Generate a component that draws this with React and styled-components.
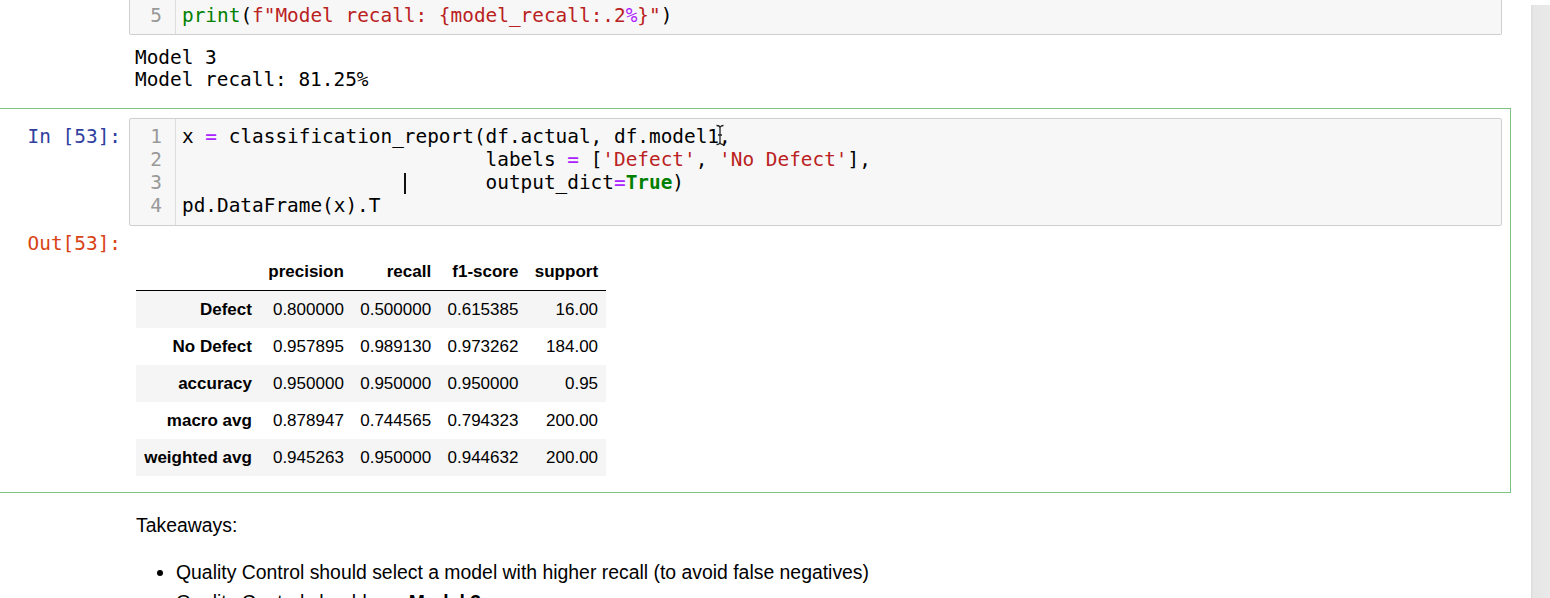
import React from "react";
import styled, { createGlobalStyle } from "styled-components";

const GlobalStyle = createGlobalStyle`
  html, body {
    margin: 0;
    padding: 0;
    background: #fff;
    height: 598px;
    overflow: hidden;
  }
`;

const mono = `"DejaVu Sans Mono", "Liberation Mono", monospace`;
const sans = `"Liberation Sans", Arial, sans-serif`;

const Page = styled.div`
  display: flex;
  height: 598px;
  background: #fff;
`;

const Notebook = styled.div`
  flex: 0 0 1511px;
  display: flex;
  flex-direction: column;
`;

const Spacer = styled.div`
  flex: 1;
`;

const Scrollbar = styled.div`
  width: 19px;
  margin-top: 5px;
  background: linear-gradient(90deg, #d9d9d9 0, #e6e6e6 2px, #e9e9e9 100%);
`;

const TopShade = styled.div`
  height: 5px;
  background: linear-gradient(#e6e6e6, #efefef 70%, #fafafa);
`;

const Cell = styled.div`
  padding: ${(p) => (p.$selected ? "9px 8px 16px 0" : "0 9px 17px 0")};
  border: ${(p) => (p.$selected ? "1px solid #7dc382" : "none")};
  border-left: none;
`;

const Row = styled.div`
  display: flex;
  align-items: flex-start;
`;

const Prompt = styled.div`
  flex: 0 0 129px;
  box-sizing: border-box;
  padding: ${(p) => p.$top || 0}px 8px 0 0;
  text-align: right;
  font-family: ${mono};
  font-size: 19.4px;
  line-height: 23px;
  color: ${(p) => (p.$out ? "#d84315" : "#303f9f")};
  white-space: pre;
`;

const CodeBox = styled.div`
  flex: 1;
  display: flex;
  background: #f7f7f7;
  border: 1px solid #cfcfcf;
  border-top: ${(p) => (p.$cut ? "none" : "1px solid #cfcfcf")};
  border-radius: ${(p) => (p.$cut ? "0 0 2px 2px" : "2px")};
  font-family: ${mono};
  font-size: 19.4px;
  line-height: 23px;
`;

const Gutter = styled.div`
  flex: 0 0 46px;
  box-sizing: border-box;
  padding: ${(p) => p.$pad};
  padding-right: 13px;
  border-right: 1px solid #dddddd;
  text-align: right;
  color: #999;
`;

const Code = styled.pre`
  flex: 1;
  margin: 0;
  padding: ${(p) => p.$pad};
  padding-left: 6px;
  font: inherit;
  color: #000;
  white-space: pre;
`;

const Tok = styled.span`
  color: ${(p) => p.$c};
  font-weight: ${(p) => (p.$b ? "bold" : "normal")};
`;

const Caret = styled.span`
  display: inline-block;
  width: 0;
  height: 21px;
  margin-right: -2px;
  border-left: 2px solid #111;
  vertical-align: -5px;
`;

const Pointer = styled.span`
  position: relative;
  display: inline-block;
  width: 0;
  height: 0;

  svg {
    position: absolute;
    left: -4px;
    top: -19px;
  }
`;

const StreamText = styled.pre`
  margin: 0;
  padding: 12px 0 0 6px;
  font-family: ${mono};
  font-size: 19.4px;
  line-height: 22px;
  color: #000;
`;

const OutputHtml = styled.div`
  padding: 27px 0 0 7px;
`;

const Table = styled.table`
  border-collapse: collapse;
  border-spacing: 0;
  font-family: ${sans};
  font-size: 17px;
  line-height: 21px;
  color: #000;

  th,
  td {
    padding: 8px 8.2px;
    text-align: right;
    white-space: nowrap;
  }

  thead th {
    border-bottom: 1px solid #000;
    vertical-align: bottom;
  }

  tbody tr:nth-child(odd) {
    background: #f5f5f5;
  }
`;

const Markdown = styled.div`
  padding: 20px 0 0 136px;
  font-family: ${sans};
  font-size: 19.4px;
  line-height: 24px;
  color: #000;

  p {
    margin: 0 0 23px;
  }

  ul {
    margin: 0;
    padding-left: 40px;
  }

  li {
    line-height: 25px;
  }

  li + li {
    margin-top: 5px;
  }
`;

const OP = "#aa22ff";
const STR = "#ba2121";
const KW = "#008000";

const rows = [
  ["Defect", "0.800000", "0.500000", "0.615385", "16.00"],
  ["No Defect", "0.957895", "0.989130", "0.973262", "184.00"],
  ["accuracy", "0.950000", "0.950000", "0.950000", "0.95"],
  ["macro avg", "0.878947", "0.744565", "0.794323", "200.00"],
  ["weighted avg", "0.945263", "0.950000", "0.944632", "200.00"],
];

const IBeam = () => (
  <svg width="10" height="22" viewBox="0 0 10 22">
    <path
      d="M1.5 1.5 C3.5 1.5 5 2.5 5 4 C5 2.5 6.5 1.5 8.5 1.5 M5 4 V18 M1.5 20.5 C3.5 20.5 5 19.5 5 18 C5 19.5 6.5 20.5 8.5 20.5 M3 11 H7"
      fill="none"
      stroke="#222"
      strokeWidth="1.3"
    />
  </svg>
);

export default function App() {
  const pad2 = " ".repeat(26);
  return (
    <>
      <GlobalStyle />
      <Page>
        <Notebook>
          <TopShade />
          <Cell>
            <Row>
              <Prompt />
              <CodeBox $cut>
                <Gutter $pad="4px 0 7px">5</Gutter>
                <Code $pad="4px 0 7px">
                  <Tok $c={KW}>print</Tok>(
                  <Tok $c={STR}>f"Model recall: {"{"}model_recall:.2</Tok>
                  <Tok $c={OP}>%</Tok>
                  <Tok $c={STR}>{"}"}"</Tok>)
                </Code>
              </CodeBox>
            </Row>
            <Row>
              <Prompt />
              <StreamText>{"Model 3\nModel recall: 81.25%"}</StreamText>
            </Row>
          </Cell>

          <Cell $selected>
            <Row>
              <Prompt $top={7}>In [53]:</Prompt>
              <CodeBox>
                <Gutter $pad="6px 0 8px">
                  1<br />2<br />3<br />4
                </Gutter>
                <Code $pad="6px 0 8px">
                  x <Tok $c={OP}>=</Tok> classification_report(df.actual, df.model1
                  <Pointer>
                    <IBeam />
                  </Pointer>
                  ,{"\n"}
                  {pad2}labels <Tok $c={OP}>=</Tok> [<Tok $c={STR}>'Defect'</Tok>,{" "}
                  <Tok $c={STR}>'No Defect'</Tok>],{"\n"}
                  {" ".repeat(19)}
                  <Caret />
                  {" ".repeat(7)}output_dict<Tok $c={OP}>=</Tok>
                  <Tok $c={KW} $b>
                    True
                  </Tok>
                  ){"\n"}
                  pd.DataFrame(x).T
                </Code>
              </CodeBox>
            </Row>
            <Row>
              <Prompt $top={6} $out>
                Out[53]:
              </Prompt>
              <OutputHtml>
                <Table>
                  <thead>
                    <tr>
                      <th></th>
                      <th>precision</th>
                      <th>recall</th>
                      <th>f1-score</th>
                      <th>support</th>
                    </tr>
                  </thead>
                  <tbody>
                    {rows.map((r) => (
                      <tr key={r[0]}>
                        <th>{r[0]}</th>
                        {r.slice(1).map((v, i) => (
                          <td key={i}>{v}</td>
                        ))}
                      </tr>
                    ))}
                  </tbody>
                </Table>
              </OutputHtml>
            </Row>
          </Cell>

          <Markdown>
            <p>Takeaways:</p>
            <ul>
              <li>
                Quality Control should select a model with higher recall (to avoid false negatives)
              </li>
              <li>
                Quality Control should use <b>Model 3</b>
              </li>
            </ul>
          </Markdown>
        </Notebook>
        <Spacer />
        <Scrollbar />
      </Page>
    </>
  );
}
